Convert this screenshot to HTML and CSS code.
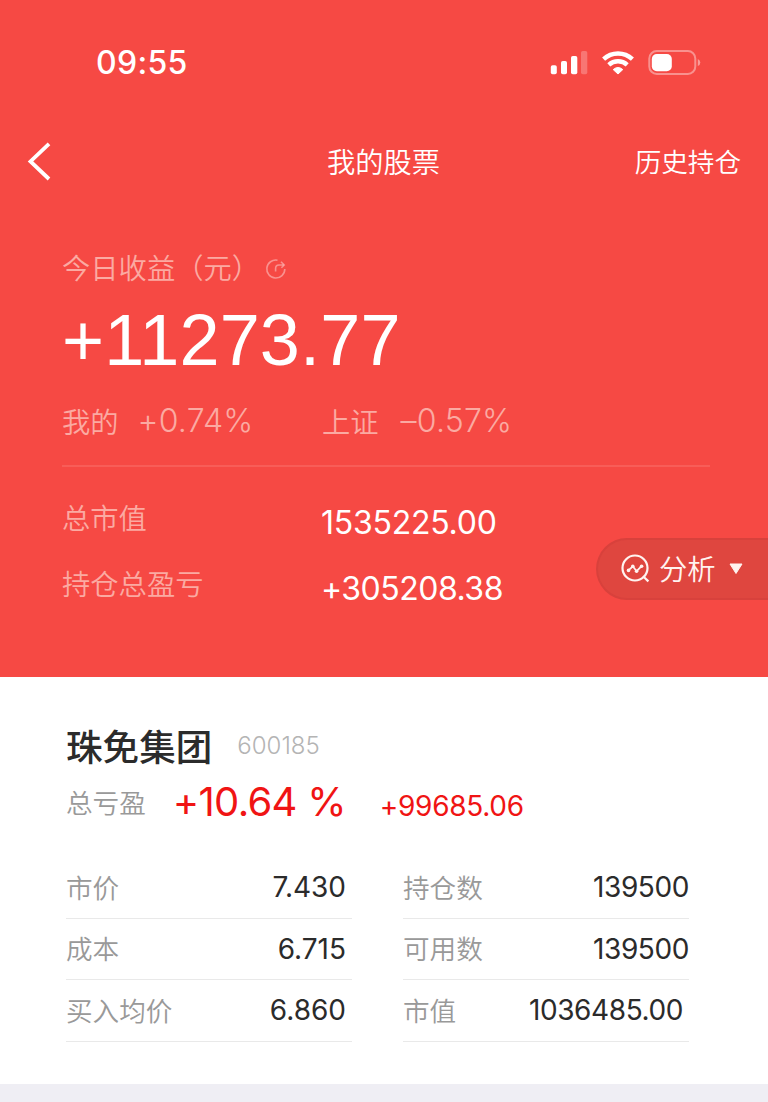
FILE: index.html
```html
<!DOCTYPE html>
<html lang="zh-CN">
<head>
    <meta charset="UTF-8">
    <meta name="viewport" content="width=device-width, initial-scale=1.0">
    <title>我的股票</title>
    <link rel="stylesheet" href="styles.css">
</head>
<body>

    <div class="header">
        <div class="status-bar">
            <span class="time">09:55</span>
            <svg class="status-icons" width="152" height="28" viewBox="0 0 152 28">
                <g fill="#fff">
                    <rect x="0.8" y="18.3" width="6" height="9" rx="1.8"/>
                    <rect x="11" y="14" width="6" height="13.3" rx="1.8"/>
                    <rect x="21" y="9" width="6.3" height="18.3" rx="1.8"/>
                    <rect x="31" y="4" width="6.3" height="23.3" rx="1.8" opacity="0.25"/>
                    <path d="M68 27 L63.2 22.6 Q68 18.4 72.8 22.6 Z" stroke="#fff" stroke-linejoin="round"/>
                </g>
                <g fill="none" stroke="#fff" stroke-width="4.4">
                    <path d="M53.6 12.2 A21 21 0 0 1 82.4 12.2"/>
                    <path d="M58.8 17.8 A13.5 13.5 0 0 1 77.2 17.8"/>
                </g>
                <rect x="99.3" y="4" width="46" height="23" rx="7.5" fill="none" stroke="#fff" stroke-opacity="0.4" stroke-width="2"/>
                <rect x="101.8" y="7" width="20" height="17.3" rx="5" fill="#fff"/>
                <path d="M147.8 12 Q150.3 13 150.3 15.5 Q150.3 18 147.8 19 Z" fill="#fff" opacity="0.45"/>
            </svg>
        </div>

        <div class="nav">
            <svg class="back" width="26" height="40" viewBox="0 0 26 40">
                <path d="M23 2.8 L4.5 20.5 L23 38" fill="none" stroke="#fff" stroke-width="3.8"/>
            </svg>
            <h1 class="title">我的股票</h1>
            <span class="history">历史持仓</span>
        </div>

        <div class="summary">
            <div class="today-label">
                今日收益（元）
                <svg class="share" width="22" height="22" viewBox="0 0 22 22" fill="none" stroke="#fff" stroke-opacity="0.4" stroke-width="1.6">
                    <path d="M12.5 2.2 A9 9 0 1 0 19.8 11"/>
                    <path d="M10.6 13.6 V10.5 Q10.6 7 14 7 H18.5"/>
                    <path d="M16 3.8 L19.2 7 L16.4 9.8"/>
                </svg>
            </div>
            <div class="today-value">+11273.77</div>
            <div class="rates">
                <div class="rate"><span>我的</span><span class="percent">+0.74%</span></div>
                <div class="rate index"><span>上证</span><span class="percent">–0.57%</span></div>
            </div>
            <div class="total">
                <span class="total-label">总市值</span>
                <span class="total-value">1535225.00</span>
            </div>
            <div class="total">
                <span class="total-label">持仓总盈亏</span>
                <span class="total-value gain">+305208.38</span>
            </div>
        </div>

        <div class="analysis">
            <svg width="30" height="30" viewBox="0 0 30 30" fill="none" stroke="#fff3f0" stroke-width="2.2">
                <circle cx="14" cy="14" r="12.5"/>
                <path d="M22 22.2 L27.4 27.4"/>
                <path d="M7.5 16.3 L11.8 12.3 L15.6 17.2 L20.6 12.2" stroke-width="1.8"/>
                <g fill="#fff3f0" stroke="none">
                    <circle cx="7.5" cy="16.4" r="1.8"/>
                    <circle cx="11.8" cy="12.3" r="1.8"/>
                    <circle cx="15.6" cy="17.2" r="1.8"/>
                    <circle cx="20.6" cy="12.2" r="1.8"/>
                </g>
            </svg>
            <span class="analysis-text">分析</span>
            <svg width="14" height="12" viewBox="0 0 14 12">
                <path d="M1 1 H13 L7 10.5 Z" fill="#fff3f0" stroke="#fff3f0" stroke-linejoin="round"/>
            </svg>
        </div>
    </div>

    <div class="stock">
        <div class="stock-name">
            <h2>珠免集团</h2>
            <span class="code">600185</span>
        </div>
        <div class="profit">
            <span class="profit-label">总亏盈</span>
            <span class="profit-rate">+10.64 %</span>
            <span class="profit-amount">+99685.06</span>
        </div>
        <div class="details">
            <div class="item inset"><span class="name">市价</span><span class="num">7.430</span></div>
            <div class="item"><span class="name">持仓数</span><span class="num long">139500</span></div>
            <div class="item inset"><span class="name">成本</span><span class="num">6.715</span></div>
            <div class="item"><span class="name">可用数</span><span class="num long">139500</span></div>
            <div class="item inset"><span class="name">买入均价</span><span class="num">6.860</span></div>
            <div class="item inset"><span class="name">市值</span><span class="num long">1036485.00</span></div>
        </div>
    </div>

</body>
</html>
```
FILE: styles.css
```css
* {
    box-sizing: border-box;
}
body {
    margin: 0;
    min-height: 1102px;
    background: #efeef4;
    font-family: Inter, "Noto Sans CJK SC", sans-serif;
    font-weight: 350;
    white-space: nowrap;
}
h1, h2 {
    margin: 0;
}
.header {
    position: relative;
    height: 677px;
    background: #f64944;
    color: #fff;
}

/* status bar */
.status-bar {
    display: flex;
    align-items: center;
    justify-content: space-between;
    height: 124px;
    padding: 0 66px 0 96px;
}
.time {
    font-size: 32px;
    font-weight: 500;
    letter-spacing: 0.3px;
}
.status-icons {
    margin-bottom: 3px;
}

/* nav */
.nav {
    display: grid;
    grid-template-columns: 1fr auto 1fr;
    align-items: center;
    height: 74px;
    padding: 0 27px 0 26px;
}
.title {
    padding-bottom: 2px;
    font-size: 28.3px;
    font-weight: 350;
}
.history {
    justify-self: end;
    padding-bottom: 2px;
    font-size: 26.6px;
}

/* summary */
.summary {
    padding: 46px 58px 0 62px;
    font-size: 28.3px;
}
.today-label {
    display: flex;
    align-items: center;
    height: 48px;
    padding-bottom: 4px;
    color: #fbaaa2;
    font-family: "Noto Sans CJK SC", sans-serif;
}
.share {
    margin: 6px 0 0 5px;
}
.today-value {
    height: 96px;
    font-family: "Liberation Sans", Arial, sans-serif;
    font-size: 72px;
    font-weight: 400;
    letter-spacing: 0.2px;
    line-height: 96px;
}
.rates {
    display: grid;
    grid-template-columns: 260px 1fr;
    height: 79px;
    padding-bottom: 12px;
    border-bottom: 2px solid #f85d58;
    color: #fbaaa2;
}
.rate {
    display: flex;
    align-items: center;
}
.percent {
    margin-left: 19px;
    font-size: 32px;
    letter-spacing: 0.2px;
}
.index .percent {
    margin-left: 22px;
}
.total {
    display: grid;
    grid-template-columns: 260px 1fr;
    align-items: center;
    height: 66px;
}
.rates + .total {
    margin-top: 22px;
}
.total-label {
    padding-bottom: 11px;
    color: #fbaaa2;
}
.total-value {
    margin-left: -1px;
    font-size: 32px;
    font-weight: 400;
    letter-spacing: -0.25px;
}
.gain {
    letter-spacing: -0.5px;
}
.analysis {
    position: absolute;
    top: 538px;
    right: 0;
    display: flex;
    align-items: center;
    width: 172px;
    height: 62px;
    padding-left: 23px;
    border: 2px solid #d8413c;
    border-right: 0;
    border-radius: 31px 0 0 31px;
    background: #df463f;
    color: #fff3f0;
}
.analysis-text {
    margin: 0 13px 0 8px;
    padding-bottom: 4px;
    font-size: 28.3px;
}

/* stock */
.stock {
    height: 407px;
    padding: 44px 79px 0 66px;
    background: #fff;
}
.stock-name {
    display: flex;
    align-items: center;
    height: 50px;
    padding-bottom: 2px;
}
.stock-name h2 {
    color: #2b2b2b;
    font-size: 36.6px;
    font-weight: 500;
}
.code {
    margin-left: 25px;
    color: #b4b4b4;
    font-size: 24px;
}
.profit {
    display: flex;
    align-items: center;
    height: 64px;
    padding-bottom: 4px;
    color: #f01414;
}
.profit-label {
    color: #999;
    font-size: 26.6px;
}
.profit-rate {
    margin-left: 27px;
    font-size: 40px;
    font-weight: 400;
    letter-spacing: -0.7px;
}
.profit-amount {
    margin-left: 34px;
    padding-top: 9px;
    font-size: 28px;
    font-weight: 400;
    letter-spacing: -0.3px;
}
.details {
    display: grid;
    grid-template-columns: 286px 286px;
    grid-auto-rows: 61.5px;
    column-gap: 51px;
    padding-top: 22px;
}
.item {
    display: flex;
    align-items: center;
    justify-content: space-between;
    border-bottom: 1px solid #e9e9e9;
    color: #999;
    font-size: 26.6px;
}
.inset {
    padding-right: 6px;
}
.name {
    padding-bottom: 2px;
}
.num {
    color: #2b2b2b;
    font-size: 28px;
    font-weight: 400;
}
.long {
    letter-spacing: -0.4px;
}
```
